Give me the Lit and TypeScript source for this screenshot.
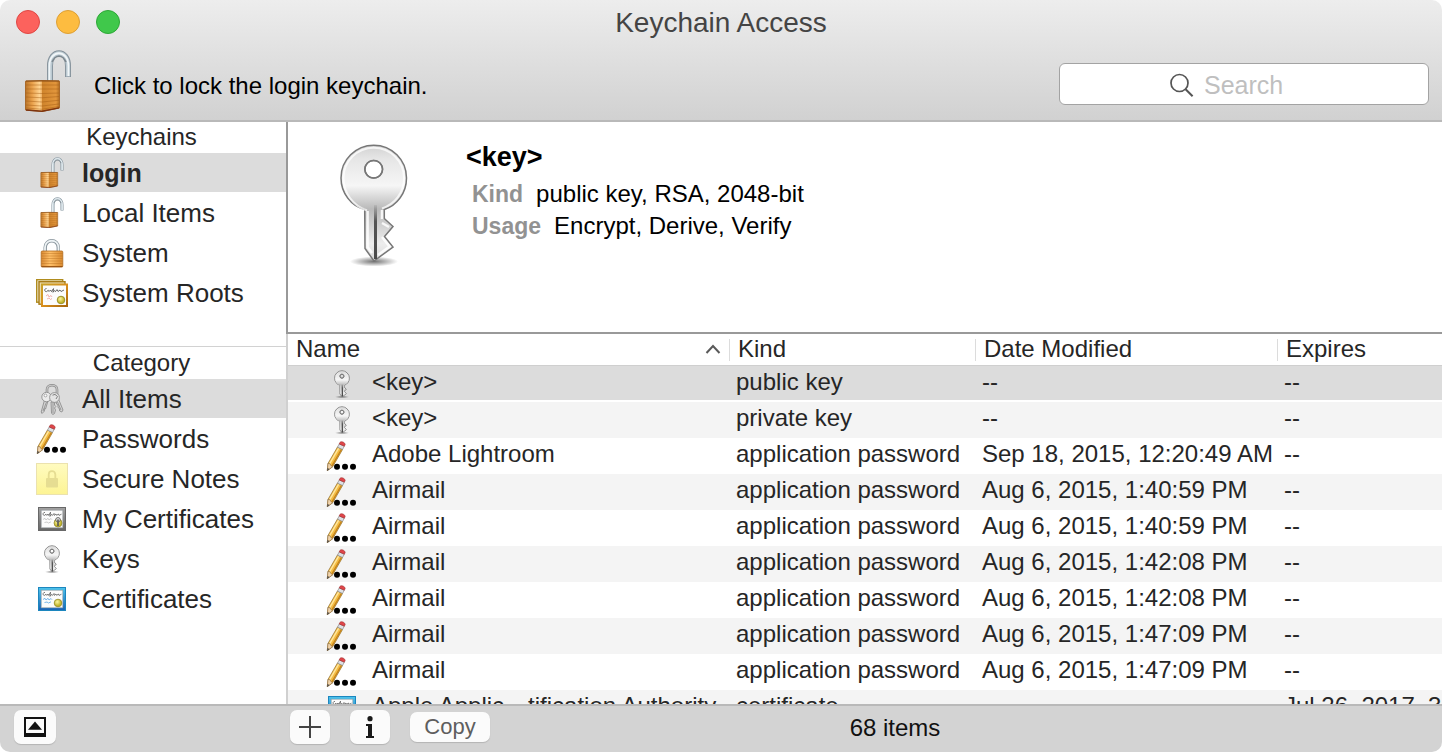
import { LitElement, html, css, svg, type TemplateResult } from "lit";
import { customElement, state } from "lit/decorators.js";
import { classMap } from "lit/directives/class-map.js";

type IconName =
  | "unlocked" | "locked" | "roots" | "keyring" | "pencil"
  | "note" | "mycert" | "key" | "cert";

const sharedPaint = svg`
  <defs>
    <linearGradient id="brassL" x1="0" x2="1" y1="0" y2="0">
      <stop offset="0" stop-color="#b9752a"/><stop offset=".4" stop-color="#e9a04a"/><stop offset=".85" stop-color="#ffd491"/><stop offset="1" stop-color="#efb061"/>
    </linearGradient>
    <linearGradient id="brassR" x1="0" x2="1" y1="0" y2="0">
      <stop offset="0" stop-color="#cf842c"/><stop offset=".8" stop-color="#e2963c"/><stop offset="1" stop-color="#b06d22"/>
    </linearGradient>
    <linearGradient id="brassFlat" x1="0" x2="1" y1="0" y2="0">
      <stop offset="0" stop-color="#d98a35"/><stop offset=".4" stop-color="#ffc069"/><stop offset="1" stop-color="#d98a30"/>
    </linearGradient>
    <linearGradient id="keyMetal" x1="0" x2="0" y1="0" y2="1">
      <stop offset="0" stop-color="#d2d2d2"/><stop offset=".12" stop-color="#e6e6e6"/><stop offset=".35" stop-color="#f6f6f6"/><stop offset=".55" stop-color="#b9b9b9"/><stop offset=".68" stop-color="#cfcfcf"/><stop offset=".85" stop-color="#ededed"/><stop offset="1" stop-color="#d8d8d8"/>
    </linearGradient>
    <linearGradient id="groove" x1="0" x2="0" y1="0" y2="1">
      <stop offset="0" stop-color="#555" stop-opacity=".1"/><stop offset=".3" stop-color="#555"/><stop offset="1" stop-color="#4a4a4a"/>
    </linearGradient>
    <radialGradient id="keyShadow"><stop offset="0" stop-color="#000" stop-opacity=".55"/><stop offset="1" stop-color="#000" stop-opacity="0"/></radialGradient>
    <linearGradient id="noteFill" x1="0" x2="0" y1="0" y2="1"><stop offset="0" stop-color="#fffbc0"/><stop offset="1" stop-color="#fdf494"/></linearGradient>
    <linearGradient id="goldFrame" x1="0" x2="1" y1="0" y2="1"><stop offset="0" stop-color="#c9a22a"/><stop offset=".5" stop-color="#d98f1c"/><stop offset="1" stop-color="#a8660d"/></linearGradient>
    <linearGradient id="grayFrame" x1="0" x2="0" y1="0" y2="1"><stop offset="0" stop-color="#a2a2a2"/><stop offset="1" stop-color="#666"/></linearGradient>
    <linearGradient id="blueFrame" x1="0" x2="0" y1="0" y2="1"><stop offset="0" stop-color="#4cc4ec"/><stop offset="1" stop-color="#1a62b4"/></linearGradient>
    <radialGradient id="seal" cx=".4" cy=".35"><stop offset="0" stop-color="#fbf6a0"/><stop offset="1" stop-color="#c3b52c"/></radialGradient>
  </defs>`;

const unlockedArt = svg`
  <g fill="none" stroke-linecap="butt">
    <path d="M26 31V16C26 -1 44 -1 44 16V27" stroke="#84919a" stroke-width="6"/>
    <path d="M26 31V16C26 -1 44 -1 44 16V26.600" stroke="#bccad2" stroke-width="4.200"/>
    <path d="M25.400 31V16C25.400 -1 44.400 -1 44.400 16V26" stroke="#f1f6f8" stroke-width="1.800"/>
    <path d="M28 12C31 4.500 39 4.500 42 12" stroke="#7b868d" stroke-width="1.400"/>
  </g>
  <path d="M1.500 31L18 30.500V61.500L1.500 60Z" fill="url(#brassL)"/>
  <path d="M18 30.500L35.500 31V58L18 61.500Z" fill="url(#brassR)"/>
  <g fill="none" stroke="#a25c14" stroke-opacity=".45" stroke-width="1.100">
    <path d="M2 35H35M2 39H35M2 43L18 43.500L35 43M2 47L18 47.700L35 46.500M2 51L18 52L35 50.300M2 55L18 56L35 54M2 58L18 59.200L35 56.500"/>
  </g>
  <path d="M1.500 31.200L18 30.500L35.500 31V58L18 61.500L1.500 60Z" fill="none" stroke="#a9692a" stroke-width="1"/>
  <path d="M2 31H35" stroke="#8a4d12" stroke-width="1.200"/>
  <path d="M2 60L18 61.300L35 57.900" fill="none" stroke="#7d3410" stroke-width="1.400"/>`;

const certArt = (frame: string, stroke: string, scribble: string) => svg`
  <rect x=".5" y="2.500" width="27" height="23" fill="url(#${frame})" stroke="${stroke}"/>
  <rect x="3.200" y="5.200" width="21.600" height="17.600" fill="#fcfcfc" stroke="#9aa0a4" stroke-width=".6"/>
  <path d="M7 7.400C4.500 7.200 4.500 10.600 6.500 10.400L8 9.200L8.800 10.400L10 9L10.800 10.500L12.500 7.200L12 11.400L13.600 9.400L14.400 10.400L16 8.500L16.300 10.400L18 9L18.700 10.400L20.300 9L21 10.400L23.500 9.200" fill="none" stroke="#4a4a4a" stroke-width=".7"/>
  <path d="M5 14.500L7 13.300L8 15L10 13.300L11 15L13 13.500L14 14.700M6.500 17.500L9 17L10.500 18L13 16.800" fill="none" stroke="${scribble}" stroke-width=".9"/>`;

const keyOutline =
  "M44.700 78.500C31 75 21 62 21 47A32.750 32.750 0 1 1 86.500 47C86.500 62 77 74.500 64.300 78.500V87.500L73 95.500L64.500 105.500L73 116L54 130L45 117.500Z" +
  "M53.700 29.500a8.800 8.800 0 1 0 .01 0Z";

function keyArt(large: boolean) {
  const weight = large ? 1.5 : 4;
  return svg`
    <ellipse cx="54" cy="130.500" rx="${large ? 24 : 34}" ry="5" fill="url(#keyShadow)"/>
    <path d="${keyOutline}" fill="url(#keyMetal)" fill-rule="evenodd" stroke="#777" stroke-width="${weight}"/>
    <path d="M47 79.500C33 75 23.500 62 23.500 47A30.250 30.250 0 1 1 84 47C84 62 75 73 62 77.500" fill="none" stroke="#fff" stroke-opacity=".75" stroke-width="2"/>
    <path d="M47.600 80V116L52 122M62 79V88M62 106L69.500 115.500L58 124M62 92L69 96" fill="none" stroke="#fff" stroke-opacity=".85" stroke-width="2.500"/>
    <rect x="${large ? 54 : 52.5}" y="74" width="${large ? 3 : 6}" height="54" fill="url(#groove)"/>
    <circle cx="53.700" cy="38.300" r="8.800" fill="none" stroke="#777" stroke-width="${weight}"/>`;
}

const icons: Record<IconName, TemplateResult> = {
  unlocked: html`<svg width="24" height="31" viewBox="0 0 48 62" aria-hidden="true">${unlockedArt}</svg>`,
  locked: html`<svg width="24" height="30" viewBox="0 0 24 30" aria-hidden="true">
    <path d="M5.200 14V9.500C5.200 .5 18.300 .5 18.300 9.500V14" fill="none" stroke="#87939b" stroke-width="3.400"/>
    <path d="M5 14V9.500C5 .5 18.500 .5 18.500 9.500V14" fill="none" stroke="#eef3f5" stroke-width="1.800"/>
    <rect x="1.200" y="13" width="21.600" height="16" rx="1" fill="url(#brassFlat)" stroke="#b16d22" stroke-width=".8"/>
    <path d="M1.500 15.500H22.500M1.500 18H22.500M1.500 20.500H22.500M1.500 23H22.500M1.500 25.500H22.500" stroke="#b56c1c" stroke-opacity=".6" stroke-width=".7"/>
    <path d="M1.500 28.600H22.500" stroke="#96500f"/></svg>`,
  roots: html`<svg width="32" height="28" viewBox="0 0 32 28" aria-hidden="true">
    <rect x=".7" y=".7" width="26" height="22.500" fill="#f4eed8" stroke="#b08c1e" stroke-width="1.400"/>
    <rect x="3" y="2.700" width="26" height="22.500" fill="#e9d9a8" stroke="#a87c18" stroke-width="1.400"/>
    <rect x="6" y="5.500" width="25" height="21.500" fill="#fcfcfc" stroke="url(#goldFrame)" stroke-width="2"/>
    <path d="M10.500 9.500C8 9.500 8.300 13 10.500 12.600L12.300 11.300L13 12.500L14.500 11L15.500 12.600L17.500 9.600L17 13.300L18.600 11.500L19.500 12.600L21 10.600L22 12.500L24 11L25 12.500L28 11" fill="none" stroke="#444" stroke-width=".8"/>
    <path d="M10 17L12 15.500L13 18L15 16.500L16 18M11 20L13 19L14.500 20.500L16 19.500" fill="none" stroke="#f0a09a" stroke-width=".8"/>
    <circle cx="25" cy="21" r="3.800" fill="url(#seal)" stroke="#948a22" stroke-width=".9"/></svg>`,
  keyring: html`<svg width="24" height="32" viewBox="0 0 24 32" aria-hidden="true">
    <path d="M7 12V6.500C7 .8 17 .8 17 6.500V12" fill="none" stroke="#8a8a8a" stroke-width="2.600"/>
    <path d="M7 12V6.500C7 .8 17 .8 17 6.500V12" fill="none" stroke="#c8c8c8" stroke-width="1.200"/>
    <g stroke="#858585" stroke-width=".8" fill="#d4d4d4">
      <path d="M15 14L18.500 16L23 27L21.800 29L19.700 28L19.400 25.500L18 24.500L18 22L16.500 21Z"/>
      <path d="M4.500 17L8 18L5.500 26L4.200 25.800L4.500 28L2 30.500L1.200 29Z"/>
      <circle cx="6.500" cy="14" r="4.700" fill="#ececec"/>
      <path d="M11 19H14.500V22L15.800 23.500L14.500 25L15.500 27L14.500 30.500L12.700 31.500L11.500 30Z"/>
      <circle cx="14.500" cy="14.500" r="4.900" fill="#e4e4e4"/>
    </g>
    <path d="M13 20V30M6.500 19L3 28M17.500 19L21 27" stroke="#7e7e7e" stroke-width=".7"/>
    <path d="M12.500 12.200L15 11.400L17.500 13.500L16 16" fill="none" stroke="#808080" stroke-width="1"/>
    <circle cx="5.500" cy="12.500" r="1.400" fill="#fff" stroke="#8d8d8d" stroke-width=".7"/></svg>`,
  pencil: html`<svg width="32" height="32" viewBox="0 0 32 32" aria-hidden="true">
    <path d="M1.300 30.600L2 23.400L11.500 7L16.600 9.400L6.600 26.800Z" fill="#f4bc42" stroke="#8d6a2a" stroke-width=".7"/>
    <path d="M3.700 23.700L12.700 8.200" stroke="#ffe7a0" stroke-width="1.400"/>
    <path d="M5.900 26L15.500 9.300" stroke="#c5821b" stroke-width="1.300"/>
    <path d="M1.300 30.600L2 23.400L4.100 23.800L4.900 25.600L6.600 26.800Z" fill="#f1d4ac" stroke="#8a6a42" stroke-width=".6"/>
    <path d="M1.200 31L1.500 27.900L3.400 29Z" fill="#444"/>
    <path d="M11.500 7.200L13.200 3.900L18.300 6.200L16.500 9.500Z" fill="#dde0e4" stroke="#888" stroke-width=".7"/>
    <path d="M13.200 3.900L14 2.300C15.200 .7 19.600 2.700 19.100 4.700L18.300 6.200Z" fill="#e0464a" stroke="#9b2c2c" stroke-width=".6"/>
    <circle cx="11" cy="26.700" r="3" fill="#000"/><circle cx="19" cy="26.700" r="3" fill="#000"/><circle cx="27" cy="26.700" r="3" fill="#000"/></svg>`,
  note: html`<svg width="32" height="32" viewBox="0 0 32 32" aria-hidden="true">
    <rect x=".5" y=".5" width="31" height="31" fill="url(#noteFill)" stroke="#ebe2ae"/>
    <rect x="10" y="15" width="12" height="9.500" rx="1" fill="#e6dd92"/>
    <path d="M12.700 15V11.500C12.700 7 19.300 7 19.300 11.500V15" fill="none" stroke="#e6dd92" stroke-width="1.800"/></svg>`,
  mycert: html`<svg width="28" height="28" viewBox="0 0 28 28" aria-hidden="true">
    ${certArt("grayFrame", "#686868", "#c4c4c4")}
    <circle cx="20" cy="18" r="4" fill="url(#seal)" stroke="#8b8430" stroke-width=".7"/>
    <circle cx="20" cy="14.800" r="2.300" fill="#ddd" stroke="#555" stroke-width=".8"/>
    <path d="M20 14.500V21" stroke="#555" stroke-width="1.600"/></svg>`,
  key: html`<svg width="18" height="30" viewBox="14 8 80 130" aria-hidden="true">${keyArt(false)}</svg>`,
  cert: html`<svg width="28" height="28" viewBox="0 0 28 28" aria-hidden="true">
    ${certArt("blueFrame", "#1c86be", "#6aaee6")}
    <circle cx="20" cy="18" r="3.800" fill="url(#seal)" stroke="#948a22" stroke-width=".8"/></svg>`,
};

interface Item { icon: IconName; label: string; }
interface Entry { icon: IconName; name: string; kind: string; modified: string; expires: string; }

const keychains: Item[] = [
  { icon: "unlocked", label: "login" },
  { icon: "unlocked", label: "Local Items" },
  { icon: "locked", label: "System" },
  { icon: "roots", label: "System Roots" },
];

const categories: Item[] = [
  { icon: "keyring", label: "All Items" },
  { icon: "pencil", label: "Passwords" },
  { icon: "note", label: "Secure Notes" },
  { icon: "mycert", label: "My Certificates" },
  { icon: "key", label: "Keys" },
  { icon: "cert", label: "Certificates" },
];

const password = (name: string, modified: string): Entry => ({
  icon: "pencil", name, kind: "application password", modified, expires: "--",
});

const entries: Entry[] = [
  { icon: "key", name: "<key>", kind: "public key", modified: "--", expires: "--" },
  { icon: "key", name: "<key>", kind: "private key", modified: "--", expires: "--" },
  password("Adobe Lightroom", "Sep 18, 2015, 12:20:49 AM"),
  password("Airmail", "Aug 6, 2015, 1:40:59 PM"),
  password("Airmail", "Aug 6, 2015, 1:40:59 PM"),
  password("Airmail", "Aug 6, 2015, 1:42:08 PM"),
  password("Airmail", "Aug 6, 2015, 1:42:08 PM"),
  password("Airmail", "Aug 6, 2015, 1:47:09 PM"),
  password("Airmail", "Aug 6, 2015, 1:47:09 PM"),
  { icon: "cert", name: "Apple Applic…tification Authority", kind: "certificate", modified: "", expires: "Jul 26, 2017, 3:16:09 PM" },
];

@customElement("app-root")
export class AppRoot extends LitElement {
  @state() private keychain = 0;
  @state() private category = 0;
  @state() private row = 0;

  static styles = css`
    :host {
      display: flex;
      flex-direction: column;
      height: 100vh;
      overflow: hidden;
      border-radius: 10px;
      background: #fff;
      color: #262626;
      font: 24px/32px "Liberation Sans", Arial, sans-serif;
    }
    *, *::before, *::after { box-sizing: border-box; }
    h1, h2, ul, dl, dd, p { margin: 0; padding: 0; }
    button { font: inherit; color: inherit; border: 0; padding: 0; background: none; text-align: left; }
    svg { display: block; flex: none; }
    .paint { position: absolute; }

    header {
      flex: none;
      background: linear-gradient(#ededed, #d1d1d1);
      border-bottom: 2px solid #b9b9b9;
    }
    .titlebar {
      display: grid;
      grid-template-columns: 1fr auto 1fr;
      align-items: center;
      height: 44px;
      padding: 0 16px;
    }
    .lights { display: flex; gap: 16px; }
    .light { width: 24px; height: 24px; border-radius: 50%; border: 1px solid; }
    .close { background: #fc625d; border-color: #df4744; }
    .minimize { background: #fdbc40; border-color: #dd9f34; }
    .zoom { background: #40c84b; border-color: #2da737; }
    h1 { padding-top: 2px; font-size: 28px; font-weight: 400; color: #444; line-height: 42px; }
    .toolbar {
      display: flex;
      align-items: center;
      justify-content: space-between;
      height: 76px;
      padding: 4px 13px 0 24px;
    }
    .lock { display: flex; align-items: center; gap: 22px; color: #000; }
    .lock span { padding-top: 4px; }
    .search { position: relative; display: block; width: 370px; }
    .search svg { position: absolute; left: 111px; top: 10px; }
    .search input {
      display: block;
      width: 100%;
      height: 42px;
      padding: 2px 12px 0 144px;
      border: 1px solid #a3a3a3;
      border-radius: 6px;
      background: #fff;
      font: 25px "Liberation Sans", Arial, sans-serif;
      outline: 0;
    }
    .search input::placeholder { color: #bfbfbf; opacity: 1; }

    .body { display: flex; flex: 1; min-height: 0; }
    nav { flex: none; width: 286px; overflow: hidden; }
    .group + .group { border-top: 1px solid #d2d2d2; }
    .chains { padding-bottom: 34px; }
    h2 { height: 31px; padding-right: 3px; font-size: 24px; line-height: 29px; font-weight: 400; text-align: center; }
    .group + .group h2 { height: 32px; line-height: 31px; }
    ul { display: flex; flex-direction: column; gap: 1px; list-style: none; }
    .item {
      display: flex;
      align-items: center;
      gap: 14px;
      width: 100%;
      height: 39px;
      padding-left: 36px;
      font-size: 26px;
    }
    .slot { display: flex; flex: none; justify-content: center; width: 32px; }
    .on { background: #dcdcdc; }
    .chains .on { font-weight: 700; font-size: 25px; }

    main { display: flex; flex-direction: column; flex: 1; min-width: 0; }
    .detail {
      display: flex;
      flex: none;
      gap: 52px;
      min-height: 212px;
      padding: 16px 46px;
      border-left: 2px solid #999;
      border-bottom: 2px solid #999;
      color: #000;
    }
    .name { margin-top: 3px; font-size: 27px; font-weight: 700; }
    dl { padding: 5px 0 0 6px; }
    dl div { display: flex; gap: 13px; }
    dt { font-weight: 700; font-size: 23px; color: #929292; }

    .list { flex: 1; min-height: 0; overflow: hidden; border-left: 2px solid #d0d0d0; }
    table { width: 100%; table-layout: fixed; border-collapse: separate; border-spacing: 0; }
    .c-name { width: 441px; }
    .c-kind { width: 246px; }
    .c-date { width: 302px; }
    th { height: 32px; padding: 0; border-bottom: 1px solid #cfcfcf; font-weight: 400; text-align: left; }
    .sort {
      display: flex;
      align-items: center;
      justify-content: space-between;
      width: 100%;
      height: 22px;
      padding: 0 8px 2px;
      border-left: 1px solid #dcdcdc;
      line-height: 20px;
    }
    th:first-child .sort { border-left: 0; }
    td { height: 36px; padding: 0 0 0 7px; line-height: 32px; white-space: nowrap; vertical-align: top; overflow: hidden; }
    td:first-child { padding-left: 38px; }
    .cell { display: flex; gap: 14px; }
    .cell .slot { align-items: center; height: 36px; }
    tbody tr:nth-child(even) { background: #f4f4f4; }
    tbody tr.on { background: #dcdcdc; box-shadow: inset 0 -2px #fff; }

    footer {
      display: flex;
      align-items: center;
      flex: none;
      height: 48px;
      padding: 0 0 4px 14px;
      border-top: 2px solid #b9b9b9;
      background: #d3d3d3;
    }
    .push {
      display: flex;
      align-items: center;
      justify-content: center;
      width: 40px;
      height: 34px;
      border-radius: 7px;
      background: #fbfbfb;
      box-shadow: 0 1px 1px #b4b4b4;
    }
    .panel { width: 42px; }
    .actions { display: flex; align-items: center; gap: 20px; margin-left: 234px; }
    .copy { width: 80px; height: 30px; font-size: 22px; color: #5e5e5e; }
    .count { flex: 1; padding: 2px 142px 0 0; text-align: center; color: #111; }
  `;

  private group(title: string, cls: string, items: Item[], current: number, pick: (i: number) => void) {
    return html`<section class="group ${cls}">
      <h2>${title}</h2>
      <ul>
        ${items.map((item, i) => html`<li>
          <button class=${classMap({ item: true, on: i === current })} @click=${() => pick(i)}>
            <span class="slot">${icons[item.icon]}</span>${item.label}
          </button>
        </li>`)}
      </ul>
    </section>`;
  }

  render() {
    const entry = entries[this.row];
    return html`
      <svg class="paint" width="0" height="0" aria-hidden="true">${sharedPaint}</svg>
      <header>
        <div class="titlebar">
          <div class="lights">
            <button class="light close" aria-label="Close"></button>
            <button class="light minimize" aria-label="Minimize"></button>
            <button class="light zoom" aria-label="Zoom"></button>
          </div>
          <h1>Keychain Access</h1>
        </div>
        <div class="toolbar">
          <button class="lock">
            <svg width="48" height="68" viewBox="0 0 48 68" aria-hidden="true">${unlockedArt}</svg>
            <span>Click to lock the login keychain.</span>
          </button>
          <label class="search">
            <input type="text" aria-label="Search" placeholder="Search" />
            <svg width="24" height="24" viewBox="0 0 24 24" fill="none" stroke="#555" stroke-width="1.700" aria-hidden="true">
              <circle cx="9.500" cy="10" r="8.500"/><path d="M15.600 16.200L22.600 23.200" stroke-width="2"/>
            </svg>
          </label>
        </div>
      </header>
      <div class="body">
        <nav>
          ${this.group("Keychains", "chains", keychains, this.keychain, (i) => (this.keychain = i))}
          ${this.group("Category", "kinds", categories, this.category, (i) => (this.category = i))}
        </nav>
        <main>
          <section class="detail">
            <svg width="80" height="130" viewBox="14 7 80 130" aria-hidden="true">${keyArt(true)}</svg>
            <div>
              <p class="name">${entry.name}</p>
              <dl>
                <div><dt>Kind</dt><dd>public key, RSA, 2048-bit</dd></div>
                <div><dt>Usage</dt><dd>Encrypt, Derive, Verify</dd></div>
              </dl>
            </div>
          </section>
          <div class="list">
            <table>
              <thead>
                <tr>
                  <th class="c-name" aria-sort="ascending"><button class="sort">Name
                    <svg width="16" height="10" viewBox="0 0 16 10" fill="none" stroke="#5a5a5a" stroke-width="2" aria-hidden="true"><path d="M1.500 9L8 2L14.500 9"/></svg>
                  </button></th>
                  <th class="c-kind"><button class="sort">Kind</button></th>
                  <th class="c-date"><button class="sort">Date Modified</button></th>
                  <th><button class="sort">Expires</button></th>
                </tr>
              </thead>
              <tbody>
                ${entries.map((e, i) => html`<tr class=${classMap({ on: i === this.row })} @click=${() => (this.row = i)}>
                  <td><div class="cell"><span class="slot">${icons[e.icon]}</span>${e.name}</div></td>
                  <td>${e.kind}</td>
                  <td>${e.modified}</td>
                  <td>${e.expires}</td>
                </tr>`)}
              </tbody>
            </table>
          </div>
        </main>
      </div>
      <footer>
        <button class="push panel" aria-label="Toggle panel">
          <svg width="22" height="20" viewBox="0 0 22 20" aria-hidden="true">
            <path d="M0 0H22V20H0ZM2 2V16H20V2Z" fill="#111" fill-rule="evenodd"/><path d="M11 4.500L18 12.800H4Z" fill="#111"/>
          </svg>
        </button>
        <div class="actions">
          <button class="push" aria-label="Add">
            <svg width="22" height="22" viewBox="0 0 22 22" stroke="#444" stroke-width="2" aria-hidden="true"><path d="M0 11H22M11 0V22"/></svg>
          </button>
          <button class="push" aria-label="Get info">
            <svg width="8" height="22" viewBox="0 0 8 22" fill="#1a1a1a" aria-hidden="true"><circle cx="4" cy="2.700" r="2.600"/><rect x="2" y="8" width="4" height="13"/><rect x="0" y="8" width="5" height="2"/><rect x="0" y="20" width="8" height="2"/></svg>
          </button>
          <button class="push copy">Copy</button>
        </div>
        <p class="count">68 items</p>
      </footer>
    `;
  }
}
